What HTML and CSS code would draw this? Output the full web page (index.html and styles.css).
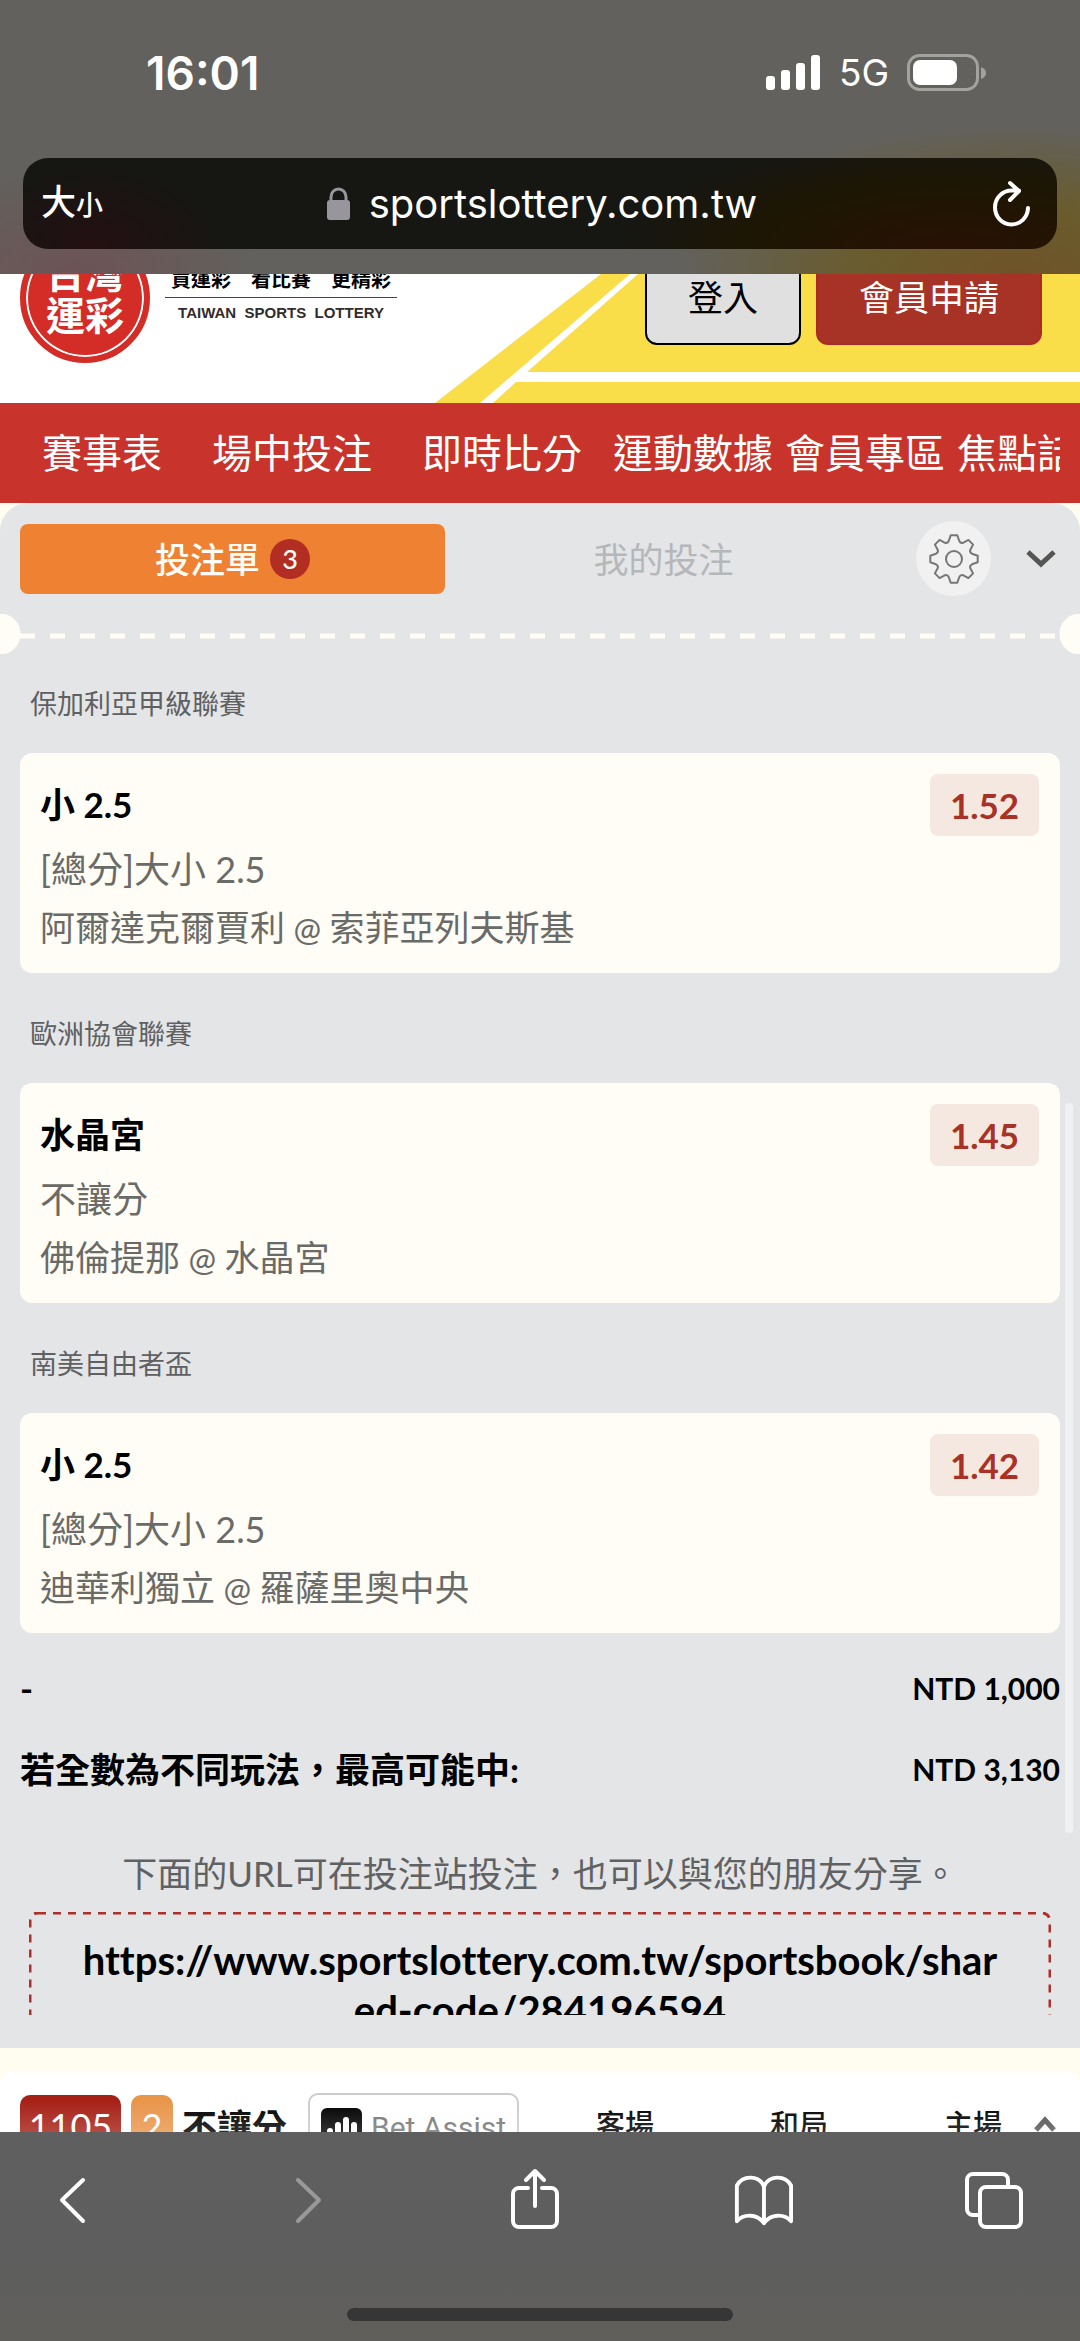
FILE: index.html
```html
<!DOCTYPE html>
<html lang="zh-Hant">
<head>
<meta charset="utf-8">
<meta name="viewport" content="width=device-width, initial-scale=1">
<title>台灣運彩</title>
<link rel="stylesheet" href="styles.css">
</head>
<body>
<div class="shell">
  <header class="browser-top">
    <div class="status">
      <span class="clock">16:01</span>
      <div class="status-right">
        <svg class="signal" viewBox="0 0 55 36" aria-hidden="true"><rect x="0" y="21" width="9" height="14" rx="3"/><rect x="15" y="15" width="9" height="20" rx="3"/><rect x="30" y="8" width="9" height="27" rx="3"/><rect x="45" y="0" width="9" height="35" rx="3"/></svg>
        <span class="network">5G</span>
        <svg class="battery" viewBox="0 0 80 38" aria-hidden="true"><rect class="battery-case" x="1.500" y="1.500" width="69" height="34" rx="11"/><rect x="6" y="6" width="44" height="25" rx="7"/><path class="battery-tip" d="M74 13q5 2 5 6t-5 6z"/></svg>
      </div>
    </div>
    <div class="address">
      <button class="text-size" type="button">大<small>小</small></button>
      <div class="site">
        <svg class="lock" viewBox="0 0 24 34" aria-hidden="true"><rect x="0" y="13" width="23" height="20" rx="3"/><path d="M4 15V10a7.500 8 0 0 1 15 0v5"/></svg>
        <span>sportslottery.com.tw</span>
      </div>
      <button class="reload" type="button" aria-label="重新載入"><svg viewBox="0 0 38 48"><path d="M35 28a16.500 17 0 1 1-16.500-17.500H26M17 3l9 8-9 9"/></svg></button>
    </div>
  </header>

  <div class="page">
    <div class="site-header">
      <svg class="rays" viewBox="0 0 645 129" aria-hidden="true"><path class="ray-yellow" d="M0 129L166 0H645V129z"/><path class="ray-white" d="M45 129L195 0H203L92 98H645V108H81L58 129z"/></svg>
      <div class="logo"><span>台灣</span><span>運彩</span></div>
      <div class="slogan"><p class="slogan-zh">買運彩　看比賽　更精彩</p><p class="slogan-en">TAIWAN&nbsp; SPORTS&nbsp; LOTTERY</p></div>
      <div class="account">
        <button class="login" type="button">登入</button>
        <button class="register" type="button">會員申請</button>
      </div>
    </div>
    <nav class="menu">
      <a class="wide" href="#">賽事表</a><a class="wide" href="#">場中投注</a><a class="wide" href="#">即時比分</a><a href="#">運動數據</a><a href="#">會員專區</a><a href="#">焦點話題</a>
    </nav>

    <section class="slip">
      <div class="tabs">
        <button class="tab active" type="button">投注單<span class="count">3</span></button>
        <button class="tab" type="button">我的投注</button>
        <button class="settings" type="button" aria-label="設定"><svg viewBox="-26 -26 52 52"><path d="M-3.300-23.700L3.300-23.700 5.300-18Q6.500-15.500 9-16.200L14.400-19.100 19.100-14.400 16.200-9Q15.500-6.500 18-5.300L23.700-3.300 23.700 3.300 18 5.300Q15.500 6.500 16.200 9L19.100 14.400 14.400 19.100 9 16.200Q6.500 15.500 5.300 18L3.300 23.700-3.300 23.700-5.300 18Q-6.500 15.500-9 16.200L-14.400 19.100-19.100 14.400-16.200 9Q-15.500 6.500-18 5.300L-23.700 3.300-23.700-3.300-18-5.300Q-15.500-6.500-16.200-9L-19.100-14.400-14.400-19.100-9-16.200Q-6.500-15.500-5.300-18Z"/><circle r="8"/></svg></button>
        <button class="collapse" type="button" aria-label="收合"><svg viewBox="0 0 30 18"><path d="M2 2L15 14 28 2"/></svg></button>
      </div>
      <div class="tear"><svg aria-hidden="true"><line x1="0" y1="22" x2="100%" y2="22"/></svg></div>

      <div class="slip-body">
        <h2 class="league">保加利亞甲級聯賽</h2>
        <article class="bet">
          <div class="bet-text"><h3>小 2.5</h3><p class="market">[總分]大小 2.5</p><p class="teams">阿爾達克爾賈利<span class="at"> @ </span>索菲亞列夫斯基</p></div>
          <span class="odds">1.52</span>
        </article>
        <h2 class="league">歐洲協會聯賽</h2>
        <article class="bet">
          <div class="bet-text"><h3>水晶宮</h3><p class="market">不讓分</p><p class="teams">佛倫提那<span class="at"> @ </span>水晶宮</p></div>
          <span class="odds">1.45</span>
        </article>
        <h2 class="league">南美自由者盃</h2>
        <article class="bet">
          <div class="bet-text"><h3>小 2.5</h3><p class="market">[總分]大小 2.5</p><p class="teams">迪華利獨立<span class="at"> @ </span>羅薩里奧中央</p></div>
          <span class="odds">1.42</span>
        </article>
        <dl class="totals">
          <div><dt>-</dt><dd>NTD 1,000</dd></div>
          <div><dt>若全數為不同玩法，最高可能中:</dt><dd>NTD 3,130</dd></div>
        </dl>
        <p class="hint">下面的URL可在投注站投注，也可以與您的朋友分享。</p>
        <div class="share-url"><svg class="outline" aria-hidden="true"><rect x="1" y="1" rx="8"/></svg><a href="#">https://www.sportslottery.com.tw/sportsbook/shared-code/284196594</a></div>
        <span class="thumb"></span>
      </div>
    </section>

    <section class="match">
      <div class="match-row">
        <span class="match-id">1105</span>
        <span class="match-min">2</span>
        <strong class="match-type">不讓分</strong>
        <button class="assist" type="button"><svg viewBox="0 0 41 41" aria-hidden="true"><rect width="41" height="41" rx="6"/><path d="M9 34V23M17 34V17M25 34V12M33 34V17"/></svg>Bet Assist</button>
        <div class="sides"><span>客場</span><span>和局</span><span>主場</span></div>
        <svg class="up" viewBox="0 0 22 16" aria-hidden="true"><path d="M2 14L11 4l9 10"/></svg>
      </div>
    </section>
  </div>

  <footer class="browser-bottom">
    <div class="tools">
      <button type="button" aria-label="上一頁"><svg viewBox="0 0 60 64"><path d="M41 13L20 33 41 54"/></svg></button>
      <button class="dim" type="button" aria-label="下一頁"><svg viewBox="0 0 60 64"><path d="M26 13L47 33 26 54"/></svg></button>
      <button type="button" aria-label="分享"><svg viewBox="0 0 60 64"><path d="M25 21H16a6 6 0 0 0-6 6v27a6 6 0 0 0 6 6h32a6 6 0 0 0 6-6V27a6 6 0 0 0-6-6H39M32 39V4M23 13l9-9 9 9"/></svg></button>
      <button type="button" aria-label="書籤"><svg viewBox="0 0 62 64"><path d="M32 19C27 7 10 7 4 18V55C11 47 25 47 32 57 39 47 53 47 60 55V18C54 7 37 7 32 19V57"/></svg></button>
      <button type="button" aria-label="分頁"><svg viewBox="0 0 60 64"><path d="M16 48H10a6 6 0 0 1-6-6V13a6 6 0 0 1 6-6h29a6 6 0 0 1 6 6v6"/><rect x="17" y="20" width="41" height="40" rx="6"/></svg></button>
    </div>
    <span class="home"></span>
  </footer>
</div>
</body>
</html>
```
FILE: styles.css
```css
* { box-sizing: border-box; }
body, h2, h3, p, dl, dd { margin: 0; }
body {
  background: #fffcf0;
  color: #000;
  font-family: Lato, "Noto Sans CJK TC", sans-serif;
}
button { border: 0; padding: 0; background: none; font: inherit; color: inherit; }
a { color: inherit; text-decoration: none; }
svg { display: block; fill: none; }

.shell { display: flex; flex-direction: column; height: 100vh; overflow: hidden; }

/* Browser chrome, top */
.browser-top {
  display: flex;
  flex-direction: column;
  flex: none;
  padding: 52px 23px 25px;
  background:
    radial-gradient(ellipse 340px 150px at 94% 100%, #6f5328 0, rgba(107, 91, 37, .85) 45%, rgba(98, 97, 60, 0) 100%),
    radial-gradient(ellipse 180px 110px at 7% 100%, #6d5355, rgba(98, 97, 93, 0)),
    #62615d;
  color: #fff;
  font-family: Inter, "Noto Sans CJK TC", sans-serif;
}
.status { display: flex; justify-content: space-between; align-items: center; height: 42px; padding: 0 70px 0 123px; }
.clock { font-size: 46px; font-weight: 600; line-height: 42px; }
.status-right { display: flex; align-items: center; gap: 18px; }
.signal { width: 55px; height: 36px; fill: #fff; }
.network { font-size: 37px; line-height: 42px; }
.battery { width: 80px; height: 38px; fill: #fff; }
.battery-case { fill: none; stroke: #a3a29f; stroke-width: 3; }
.battery-tip { fill: #a3a29f; }
.address {
  display: flex;
  align-items: center;
  justify-content: space-between;
  height: 91px;
  margin-top: 64px;
  padding: 0 26px 0 18px;
  border-radius: 25px;
  background:
    radial-gradient(ellipse 340px 110px at 90% 100%, #281102 0, rgba(30, 22, 2, .9) 60%, rgba(22, 22, 0, 0) 100%),
    radial-gradient(ellipse 120px 80px at 7% 100%, #240f11, rgba(22, 21, 19, 0)),
    #161613;
}
.text-size { width: 112px; text-align: left; font-size: 35px; font-weight: 500; line-height: 46px; }
.text-size small { font-size: 27px; }
.site { display: flex; align-items: center; gap: 18px; font-size: 40px; line-height: 48px; }
.lock { width: 24px; height: 34px; fill: #98969c; }
.lock path { fill: none; stroke: #98969c; stroke-width: 3; }
.reload { display: flex; justify-content: flex-end; width: 100px; }
.reload svg { width: 38px; height: 48px; stroke: #fff; stroke-width: 4; stroke-linecap: round; stroke-linejoin: round; }

/* Web page */
.page { display: flex; flex-direction: column; flex: 1; min-height: 0; overflow: hidden; }
.site-header { position: relative; display: flex; align-items: flex-end; flex: none; height: 129px; padding: 0 38px 0 20px; overflow: hidden; background: #fff; }
.rays { position: absolute; right: 0; bottom: 0; width: 645px; height: 129px; }
.ray-yellow { fill: #f9de4a; }
.ray-white { fill: #fff; }
.logo {
  display: flex;
  flex-direction: column;
  align-items: center;
  justify-content: center;
  width: 130px;
  height: 130px;
  margin-bottom: 40px;
  padding-bottom: 8px;
  border: 6px solid #d42c27;
  border-radius: 50%;
  background: #d42c27;
  box-shadow: inset 0 0 0 2px #fff;
  color: #fff;
  font-size: 39px;
  font-weight: 700;
  line-height: 42px;
}
.slogan { width: 232px; margin: 0 0 82px 15px; text-align: center; }
.slogan-zh { padding-bottom: 5px; border-bottom: 1px solid #444; font-size: 20px; font-weight: 700; line-height: 26px; white-space: nowrap; }
.slogan-en { padding-top: 7px; color: #332b2b; font: 700 15px/16px "Liberation Sans", sans-serif; white-space: nowrap; }
.account { position: relative; display: flex; gap: 15px; margin: 0 0 58px auto; font-size: 35px; line-height: 50px; }
.account button { height: 96px; border: 2px solid #000; border-radius: 12px; }
.login { width: 156px; background: #e0e0e0; }
.account .register { width: 226px; border-color: #ad2a20; background: #a63325; color: #fff; }
.menu { display: flex; align-items: center; flex: none; height: 100px; margin: 0; padding-left: 17px; border-right: 20px solid #c8342b; overflow: hidden; background: #c8342b; color: #fff; font-size: 40px; line-height: 60px; white-space: nowrap; }
.menu a { flex: none; padding: 0 6px; }
.menu .wide { padding: 0 25px; }

/* Bet slip */
.slip { display: flex; flex-direction: column; flex: 1; min-height: 0; padding-bottom: 33px; border-radius: 28px 28px 0 0; background: #e4e5e7; }
.tabs { display: flex; align-items: center; flex: none; padding: 18px 24px 0 20px; }
.tab { display: flex; align-items: center; justify-content: center; gap: 10px; flex: 1; height: 70px; border-radius: 8px; color: #b5b7b9; font-size: 35px; line-height: 50px; }
.tab.active { margin-right: 6px; background: #ef8132; color: #fffdf6; font-weight: 500; }
.count { width: 40px; height: 40px; border-radius: 50%; background: #b22d22; font-size: 27px; line-height: 40px; text-align: center; }
.settings { display: grid; place-items: center; width: 75px; height: 75px; margin-left: 40px; border-radius: 50%; background: #f1f1f1; }
.settings svg { width: 52px; height: 52px; stroke: #777; stroke-width: 2; stroke-linejoin: round; }
.collapse { margin-left: 35px; }
.collapse svg { width: 30px; height: 18px; stroke: #555; stroke-width: 5; }
.tear { display: flex; flex: none; height: 40px; margin-top: 18px; padding: 0 20px; background: radial-gradient(circle at 0 50%, #fffdf6 20px, transparent 21px), radial-gradient(circle at 100% 50%, #fffdf6 20px, transparent 21px); }
.tear svg { width: 100%; height: 40px; stroke: #fffdf6; stroke-width: 5; stroke-dasharray: 15 15; }
.slip-body { position: relative; flex: 1; min-height: 0; padding: 0 20px; overflow: hidden; }
.league { padding: 41px 10px 29px; color: #5f6061; font-size: 27px; font-weight: 400; line-height: 40px; }
.league:first-child { padding-top: 30px; }
.bet { display: flex; justify-content: space-between; align-items: flex-start; height: 220px; padding: 21px 21px 0 20px; border-radius: 12px; background: #fffdf6; }
.bet h3 { font-size: 35px; font-weight: 700; line-height: 60px; }
.bet p { color: #6a6a67; line-height: 58px; }
.market { padding-top: 6px; font-size: 36px; }
.teams { font-size: 35px; }
.at { font-size: 33px; }
.odds { width: 109px; height: 62px; border-radius: 8px; background: #f5e8e1; color: #a83226; font-size: 35px; font-weight: 700; line-height: 62px; text-align: center; }
.totals { padding-top: 32px; font-weight: 700; }
.totals div { display: flex; justify-content: space-between; height: 81px; line-height: 46px; }
.totals dt { font-size: 35px; }
.totals dd { font-size: 30px; }
.hint { margin-top: 21px; color: #606162; font-size: 35px; line-height: 50px; text-align: center; }
.share-url { position: relative; margin: 14px 9px 0; padding: 23px 45px; font-size: 40px; font-weight: 700; font-variant-ligatures: none; line-height: 50px; text-align: center; word-break: break-all; }
.outline { position: absolute; inset: 0; width: 100%; height: 100%; stroke: #b03028; stroke-width: 3; stroke-dasharray: 8 7; }
.outline rect { width: calc(100% - 2px); height: calc(100% - 2px); }
.thumb { position: absolute; top: 449px; right: 7px; width: 8px; height: 730px; border-radius: 4px; background: #f0f1f3; }

/* Match list */
.match { flex: none; height: 84px; padding-top: 24px; overflow: hidden; }
.match-row { position: relative; display: flex; align-items: flex-start; height: 120px; padding: 21px 24px 0 20px; border-radius: 12px; background: #fff; }
.match-row::after { content: ""; position: absolute; inset: 28px 0 auto; height: 32px; background: linear-gradient(rgba(255, 255, 255, 0), rgba(255, 255, 255, .18)); }
.match-id, .match-min { height: 64px; margin-top: 2px; border-radius: 10px; color: #fff; font-size: 36px; line-height: 62px; text-align: center; }
.match-id { width: 101px; background: #a62016; }
.match-min { width: 42px; margin-left: 10px; background: #e9954a; }
.match-type { margin-left: 9px; font-size: 35px; line-height: 66px; }
.assist { display: flex; align-items: center; gap: 9px; width: 211px; height: 70px; margin-left: 21px; padding-left: 11px; border: 2px solid #ccc; border-radius: 10px; color: #777; font: 30px/64px Roboto, sans-serif; white-space: nowrap; }
.assist svg { flex: none; width: 41px; height: 41px; fill: #000; }
.assist path { stroke: #fff; stroke-width: 6; stroke-linecap: round; }
.sides { display: flex; flex: 1; justify-content: space-between; padding: 0 32px 0 77px; font-size: 29px; font-weight: 500; line-height: 64px; }
.up { width: 22px; height: 16px; margin-top: 23px; stroke: #555; stroke-width: 5; }

/* Browser chrome, bottom */
.browser-bottom { display: flex; flex-direction: column; align-items: center; justify-content: space-between; flex: none; height: 209px; padding: 35px 0 20px; background: linear-gradient(#5f5f5f, #5e5e5e 60%, #605f5b); }
.tools { display: flex; justify-content: space-between; width: 100%; padding: 0 57px 0 42px; }
.tools svg { width: 60px; height: 64px; stroke: #fff; stroke-width: 4; stroke-linecap: round; stroke-linejoin: round; }
.tools .dim svg { stroke: #999; }
.home { width: 386px; height: 13px; border-radius: 7px; background: #363636; }
```
